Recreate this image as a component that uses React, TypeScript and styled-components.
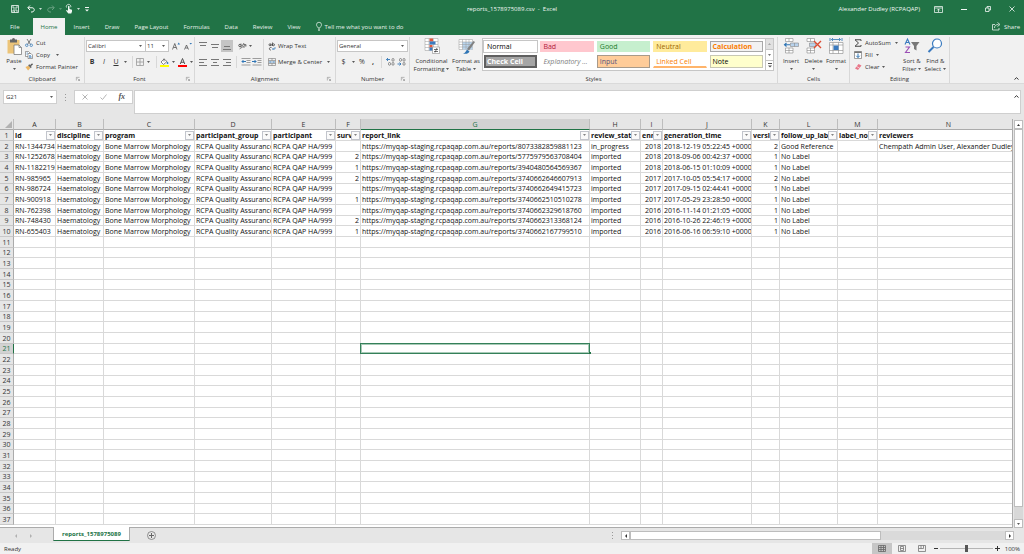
import React from "react";
import styled, { createGlobalStyle, css } from "styled-components";

const GREEN = "#217346";
const LINE = "#d9d9d9";
const UI_FONT = '"Open Sans", "Noto Sans", sans-serif';

const GlobalStyle = createGlobalStyle`
  * { box-sizing: border-box; }
  body { margin: 0; background: #e6e6e6; font: 6px/8px ${UI_FONT}; color: #333; }
  button, input, select, textarea {
    font: inherit; color: inherit; margin: 0; padding: 0; border: 0;
    border-radius: 0; background: none; outline: none;
  }
  button { white-space: nowrap; }
  svg { display: block; flex: none; overflow: visible; }
`;

const Window = styled.div`
  display: flex;
  flex-direction: column;
  height: 100vh;
  overflow: hidden;
`;

/* ---------- title bar and tabs ---------- */

const TitleBar = styled.header`
  display: grid;
  grid-template-columns: 1fr auto 1fr;
  align-items: center;
  height: 18px;
  flex: none;
  background: ${GREEN};
  color: #f3f8f5;
`;

const QuickAccess = styled.div`
  display: flex;
  align-items: center;
  padding-left: 11px;
`;

const QuickButton = styled.button<{ $gap?: number; $dim?: boolean }>`
  display: flex;
  align-items: center;
  gap: 4px;
  margin-right: ${(p) => p.$gap ?? 5}px;
  opacity: ${(p) => (p.$dim ? 0.35 : 1)};
`;

const DocumentName = styled.h1`
  margin: 0;
  font: inherit;
  white-space: pre;
`;

const WindowSide = styled.div`
  display: flex;
  align-items: center;
  justify-content: flex-end;
  padding-right: 9px;
`;

const UserName = styled.span`
  margin-right: 14px;
`;

const WindowButton = styled.button`
  margin-left: 18px;
  &:first-of-type { margin-left: 0; }
`;

const TabStrip = styled.nav`
  display: flex;
  align-items: stretch;
  height: 17px;
  flex: none;
  padding-left: 2px;
  background: ${GREEN};
  color: #e6f0ea;
`;

const RibbonTab = styled.button<{ $active?: boolean }>`
  padding: 0 7px 0 8px;
  &:first-child { padding-right: 13px; }
  ${(p) => p.$active && css`
    padding-right: 8px;
    background: #f1f1f1;
    color: ${GREEN};
  `}
`;

const TellMe = styled.button`
  display: flex;
  align-items: center;
  gap: 3px;
  padding-left: 8px;
`;

const ShareButton = styled(TellMe)`
  margin-left: auto;
  padding-right: 4px;
`;

/* ---------- ribbon ---------- */

const Ribbon = styled.section`
  display: flex;
  flex: none;
  height: 49px;
  padding-top: 2px;
  background: #f1f1f1;
  border-bottom: 1px solid #dadada;
`;

const Group = styled.section<{ $width: number }>`
  display: flex;
  flex-direction: column;
  width: ${(p) => p.$width}px;
  flex: none;
  border-right: 1px solid #d8d8d8;
`;

const GroupBody = styled.div<{ $pad?: number; $gap?: number }>`
  display: flex;
  flex: 1;
  gap: ${(p) => p.$gap ?? 0}px;
  padding-left: ${(p) => p.$pad ?? 4}px;
`;

const GroupFooter = styled.footer`
  display: grid;
  grid-template-columns: 8px 1fr 8px;
  align-items: center;
  height: 8px;
  text-align: center;
`;

const Stack = styled.div<{ $pad?: number }>`
  display: flex;
  flex-direction: column;
  padding-top: ${(p) => p.$pad ?? 0}px;
`;

const SmallButton = styled.button`
  display: flex;
  align-items: center;
  gap: 3px;
  height: 12px;
`;

const BigButton = styled.button<{ $width: number }>`
  display: flex;
  flex-direction: column;
  align-items: center;
  justify-content: flex-start;
  gap: 3px;
  width: ${(p) => p.$width}px;
  padding-top: 1px;
`;

const BigLabel = styled.span`
  display: flex;
  flex-direction: column;
  align-items: center;
`;

const BigPicture = styled.span`
  display: grid;
  place-items: center;
  height: 16px;
`;

const CaretLine = styled.span`
  display: flex;
  align-items: center;
  gap: 2px;
  height: 8px;
`;

const ToolRow = styled.div`
  display: flex;
  align-items: center;
  height: 16px;
`;

const Tool = styled.button<{ $width: number; $active?: boolean }>`
  display: flex;
  align-items: center;
  justify-content: center;
  width: ${(p) => p.$width}px;
  height: 12px;
  flex: none;
  font-size: 7px;
  background: ${(p) => (p.$active ? "#c5c5c5" : "transparent")};
`;

const WideTool = styled.button`
  display: flex;
  align-items: center;
  gap: 2px;
  height: 12px;
  padding-left: 4px;
`;

const Separator = styled.span`
  width: 1px;
  height: 12px;
  margin: 0 3px;
  background: #d8d8d8;
`;

const TallRule = styled.span`
  width: 1px;
  margin: 2px 0 5px;
  background: #d8d8d8;
`;

const SelectBox = styled.label<{ $width: number }>`
  display: flex;
  align-items: center;
  width: ${(p) => p.$width}px;
  height: 12px;
  margin-right: -1px;
  padding: 0 3px 0 1px;
  background: #fff;
  border: 1px solid #c6c6c6;
`;

const Select = styled.select`
  flex: 1;
  min-width: 0;
  appearance: none;
  line-height: 8px;
`;

const Gallery = styled.div`
  display: flex;
  width: 292px;
  height: 33px;
  margin-top: 1px;
  background: #fff;
  border: 1px solid #c6c6c6;
`;

const GalleryGrid = styled.div`
  display: grid;
  flex: 1;
  grid-template-columns: repeat(5, 1fr);
  gap: 3px;
  padding: 2px 2px 2px 1px;
`;

type Swatch = { label: string; fg: string; bg: string; edge?: string; bold?: boolean; italic?: boolean; under?: string; ring?: boolean; double?: boolean };

const StyleButton = styled.button<{ $s: Swatch }>`
  overflow: hidden;
  padding: 0 2px;
  font-size: 7px;
  line-height: 9px;
  text-align: left;
  color: ${(p) => p.$s.fg};
  background: ${(p) => p.$s.bg};
  border: 1px solid ${(p) => p.$s.edge ?? "transparent"};
  font-weight: ${(p) => (p.$s.bold ? 700 : 400)};
  font-style: ${(p) => (p.$s.italic ? "italic" : "normal")};
  ${(p) => p.$s.under && css`border-bottom: 2px solid ${p.$s.under};`}
  ${(p) => p.$s.double && css`border-width: 2px; padding: 0 1px;`}
  ${(p) => p.$s.ring && css`box-shadow: 0 0 0 1px #c6c6c6;`}
`;

const GalleryScroll = styled.div`
  display: grid;
  grid-template-rows: repeat(3, 1fr);
  width: 8px;
  border-left: 1px solid #c6c6c6;
`;

const GalleryArrow = styled.button<{ $off?: boolean }>`
  display: grid;
  place-items: center;
  background: ${(p) => (p.$off ? "#e1e1e1" : "#fff")};
  color: ${(p) => (p.$off ? "#a6a6a6" : "#555")};
  & + & { border-top: 1px solid #c6c6c6; }
`;

const RibbonEnd = styled.div`
  display: flex;
  flex: 1;
  align-items: flex-end;
  justify-content: flex-end;
  padding: 0 5px 3px 0;
`;

/* ---------- formula bar ---------- */

const FormulaBar = styled.section`
  display: flex;
  align-items: flex-start;
  flex: none;
  height: 35px;
  padding: 6px 3px 0;
`;

const NameBox = styled.label`
  display: flex;
  align-items: center;
  width: 54px;
  height: 14px;
  padding: 0 3px 0 2px;
  background: #fff;
  border: 1px solid #cfcfcf;
`;

const NameInput = styled.input`
  flex: 1;
  min-width: 0;
`;

const Grip = styled.span`
  display: grid;
  place-items: center;
  width: 17px;
  height: 14px;
`;

const FormulaActions = styled.div`
  display: flex;
  align-items: center;
  justify-content: space-around;
  width: 59px;
  height: 14px;
  padding: 0 1px;
  background: #fff;
  border: 1px solid #cfcfcf;
`;

const FunctionMark = styled.i`
  font: italic 700 8px/8px "Liberation Serif", serif;
  color: #555;
`;

const FormulaField = styled.label`
  display: flex;
  flex: 1;
  height: 24px;
  margin-left: 1px;
  padding: 4px 1px 0;
  background: #fff;
  border: 1px solid #cfcfcf;
`;

const FormulaInput = styled.textarea`
  flex: 1;
  height: 16px;
  resize: none;
`;

/* ---------- sheet ---------- */

const SheetArea = styled.main`
  display: flex;
  flex: 1;
  min-height: 0;
`;

const SheetView = styled.div`
  flex: 1;
  min-width: 0;
  overflow: hidden;
  background: #fff;
  border-right: 1px solid #ababab;
  border-bottom: 1px solid #ababab;
`;

const Grid = styled.table`
  width: calc(100% + 8px);
  table-layout: fixed;
  border-collapse: separate;
  border-spacing: 0;
  font-size: 7px;
  line-height: 9px;
  color: #111;
`;

const Col = styled.col<{ $width?: number }>`
  width: ${(p) => (p.$width ? `${p.$width}px` : "auto")};
`;

const SheetRow = styled.tr`
  height: 11px;
  &:nth-child(3n) { height: 10px; }
`;

const ColumnHead = styled.th<{ $active?: boolean }>`
  height: 11px;
  padding: 0;
  font-weight: 400;
  line-height: 9px;
  text-align: center;
  color: ${(p) => (p.$active ? GREEN : "#333")};
  background: ${(p) => (p.$active ? "#d2d2d2" : "#e6e6e6")};
  border-right: 1px solid #bdbdbd;
  border-bottom: 1px solid ${(p) => (p.$active ? GREEN : "#ababab")};
`;

const RowHead = styled.th<{ $active?: boolean }>`
  padding: 0;
  font-weight: 400;
  line-height: 9px;
  text-align: center;
  color: ${(p) => (p.$active ? GREEN : "#333")};
  background: ${(p) => (p.$active ? "#d2d2d2" : "#e6e6e6")};
  border-right: 1px solid ${(p) => (p.$active ? GREEN : "#ababab")};
  border-bottom: 1px solid #c8c8c8;
`;

const Corner = styled.td`
  padding: 1px 1px 0 5px;
  background: #e6e6e6;
  border-right: 1px solid #bdbdbd;
  border-bottom: 1px solid #ababab;
`;

const Cell = styled.td<{ $right?: boolean; $selected?: boolean }>`
  padding: ${(p) => (p.$right ? "0 1px 0 0" : "0 0 0 1px")};
  text-align: ${(p) => (p.$right ? "right" : "left")};
  border-right: 1px solid ${LINE};
  border-bottom: 1px solid ${LINE};
  ${(p) => p.$selected && css`
    position: relative;
    &::before {
      content: "";
      position: absolute;
      inset: -1px -1px -1px -1px;
      border: 1px solid #35805a;
      box-shadow: inset 0 0 0 1px #a9cbb8;
    }
    &::after {
      content: "";
      position: absolute;
      right: -2px;
      bottom: -1px;
      width: 2px;
      height: 2px;
      background: ${GREEN};
    }
  `}
`;

const CellText = styled.div`
  height: 9px;
  overflow: hidden;
  white-space: nowrap;
`;

const FieldCell = styled.td`
  padding: 0 0 0 1px;
  font-weight: 700;
  border-right: 1px solid ${LINE};
  border-bottom: 1px solid ${LINE};
`;

const FieldInner = styled.div`
  display: flex;
  align-items: center;
  height: 10px;
`;

const FieldName = styled.span`
  flex: 1;
  min-width: 0;
  overflow: hidden;
  white-space: nowrap;
`;

const FilterButton = styled.button`
  display: grid;
  place-items: center;
  width: 9px;
  height: 9px;
  flex: none;
  background: #fafafa;
  border: 1px solid #c2c5cc;
  color: #666;
`;

const VerticalBar = styled.div`
  display: flex;
  flex-direction: column;
  width: 11px;
  padding: 1px 1px 0;
`;

const BarButton = styled.button`
  display: grid;
  place-items: center;
  width: 9px;
  height: 9px;
  flex: none;
  background: #fff;
  border: 1px solid #bdbdbd;
`;

const VerticalTrack = styled.div`
  display: flex;
  flex-direction: column;
  flex: 1;
  background: #d8d8d8;
`;

const VerticalThumb = styled.div`
  height: 97%;
  background: #fff;
  border: 1px solid #bdbdbd;
`;

/* ---------- sheet tabs and status ---------- */

const SheetTabs = styled.nav`
  display: flex;
  align-items: center;
  flex: none;
  height: 15px;
`;

const TabArrows = styled.div`
  display: flex;
  justify-content: space-between;
  width: 53px;
  padding: 0 21px 0 15px;
  color: #b0b0b0;
`;

const SheetTab = styled.button`
  align-self: flex-start;
  height: 14px;
  margin-top: -1px;
  padding: 1px 8px 0;
  font-weight: 700;
  color: ${GREEN};
  background: #fff;
  border: solid #ababab;
  border-width: 0 1px;
  border-bottom: 1px solid ${GREEN};
`;

const AddSheet = styled.button`
  margin-left: 17px;
`;

const HorizontalArea = styled.div`
  display: flex;
  align-items: center;
  width: 40%;
  margin: 0 10px 0 auto;
`;

const HorizontalTrack = styled.div`
  flex: 1;
  height: 9px;
  background: #dadada;
`;

const HorizontalThumb = styled.div`
  width: 67%;
  height: 9px;
  background: #fff;
  border: 1px solid #bdbdbd;
`;

const StatusBar = styled.footer`
  display: flex;
  align-items: center;
  flex: none;
  height: 11px;
  padding: 0 4px;
  background: #f1f1f1;
`;

const ViewButtons = styled.div`
  display: flex;
  margin: 0 2px 0 auto;
`;

const ViewButton = styled.button<{ $active?: boolean }>`
  display: grid;
  place-items: center;
  width: 20px;
  height: 11px;
  background: ${(p) => (p.$active ? "#c6c6c6" : "transparent")};
`;

const ZoomSlider = styled.input`
  appearance: none;
  width: 53px;
  height: 7px;
  margin: 0 2px;
  background: linear-gradient(#b5b5b5, #b5b5b5) center / 100% 1px no-repeat;
  &::-webkit-slider-thumb {
    appearance: none;
    width: 3px;
    height: 7px;
    background: #555;
  }
`;

const ZoomValue = styled.span`
  margin-left: 5px;
`;

/* ---------- icons ---------- */

type IconProps = { w?: number; h?: number; box?: string; children: React.ReactNode; line?: string; sw?: number };
const Icon = ({ w = 9, h = 9, box, children, line = "currentColor", sw = 1 }: IconProps) => (
  <svg width={w} height={h} viewBox={box ?? `0 0 ${w} ${h}`} fill="none" stroke={line} strokeWidth={sw} aria-hidden="true">{children}</svg>
);

const Caret = () => <Icon w={3} h={2}><path d="M0 0h3L1.500 2z" fill="currentColor" fillOpacity=".8" stroke="none" /></Icon>;
const CaretUp = () => <Icon w={3} h={2}><path d="M0 2h3L1.500 0z" fill="currentColor" stroke="none" /></Icon>;
const CaretLeft = () => <Icon w={2} h={4}><path d="M2 0v4L0 2z" fill="currentColor" stroke="none" /></Icon>;
const CaretRight = () => <Icon w={2} h={4}><path d="M0 0v4l2-2z" fill="currentColor" stroke="none" /></Icon>;
const Chevron = () => <Icon w={5} h={3}><path d="M.5 2.500 2.500.7l2 1.800" /></Icon>;
const Launcher = () => <Icon w={4} h={4} box="0 0 8 8"><path d="M7 .7H.7V7M3 3l4 4M7 4v3H4" stroke="#777" /></Icon>;

const SaveIcon = () => <Icon w={8} h={8} box="0 0 16 16" sw={1.600}><path d="M1 1h14v14H1zM4 1v5h8V1M4 15v-5h8v5M7 11v4" /></Icon>;
const UndoIcon = ({ flip }: { flip?: boolean }) => (
  <Icon w={8} h={8} box="0 0 16 16" sw={2}><path transform={flip ? "matrix(-1 0 0 1 16 0)" : undefined} d="M6 1 1.500 5.500 6 10M2 5.500h8c6 0 6 8 0 8.500H8" /></Icon>
);
const TouchIcon = () => (
  <Icon w={8} h={10} box="0 0 16 20" sw={1.600}>
    <path d="M3 7a4.500 4.500 0 1 1 8.500-.5" />
    <path d="M6 5c0-2 3-2 3 0v5l5 1.500V15l-1.500 4H6.500L2 13l1.500-1L6 13.500z" fill="currentColor" stroke="none" />
  </Icon>
);
const CustomizeIcon = () => <Icon w={4} h={5}><path d="M0 .5h4" /><path d="M0 2.500h4L2 4.500z" fill="currentColor" stroke="none" /></Icon>;
const DisplayIcon = () => <Icon w={9} h={7} box="0 0 18 14" sw={1.500}><path d="M1 1h16v12H1zM1 4h16M9 12V6M6 9l3-3 3 3" /></Icon>;
const MinIcon = () => <Icon w={6} h={6}><path d="M0 3.500h6" /></Icon>;
const RestoreIcon = () => <Icon w={6} h={6} box="0 0 12 12" sw={1.600}><path d="M1 4h7v7H1zM4 4V1h7v7H8" /></Icon>;
const CloseIcon = () => <Icon w={6} h={6} box="0 0 12 12" sw={1.600}><path d="m1 1 10 10M11 1 1 11" /></Icon>;
const BulbIcon = () => <Icon w={6} h={9} box="0 0 12 18" sw={1.500}><path d="M4 12c0-2.500-3-3-3-6.500a5 5 0 0 1 10 0C11 9 8 9.500 8 12zM4 14.500h4M4.500 17h3" /></Icon>;
const ShareIcon = () => <Icon w={9} h={9} box="0 0 18 18" sw={1.600}><path d="M6 5H1v11h13v-4M5 12c0-5 3-7 8-7M11 1l5 4-5 4" /></Icon>;

const PasteIcon = () => (
  <Icon w={15} h={17} box="0 0 30 34">
    <path d="M1 4h24v27H1z" fill="#ecc479" stroke="none" />
    <path d="M6 3h4a3 3 0 0 1 6 0h4v6H6z" fill="#666" stroke="none" />
    <path d="M14 14h10l5 5v14H14z" fill="#fff" stroke="#777" strokeWidth={1.500} />
    <path d="M24 14v5h5" stroke="#777" strokeWidth={1.500} />
  </Icon>
);
const CutIcon = () => (
  <Icon w={8} h={8} box="0 0 16 16" sw={1.500}>
    <path d="m4 0 7 11M12 0 5 11" stroke="#555" />
    <circle cx="3.500" cy="12.500" r="2.500" stroke="#2f75b5" /><circle cx="12.500" cy="12.500" r="2.500" stroke="#2f75b5" />
  </Icon>
);
const CopyIcon = () => (
  <Icon w={8} h={8} box="0 0 16 16" sw={1.200}>
    <path d="M1 1h6l3 3v7H1z" fill="#fff" stroke="#666" /><path d="M6 5h6l3 3v7H6z" fill="#fff" stroke="#666" />
    <path d="M3 4h3M3 6.500h2M8 9h4M8 11h5M8 13h5" stroke="#2f75b5" />
  </Icon>
);
const BrushIcon = () => (
  <Icon w={8} h={8} box="0 0 18 16">
    <path d="M1 8 8 5l4 5-5 6z" fill="#ecb765" stroke="none" /><path d="m7 4 3-2 5 6-2 3z" fill="#666" stroke="none" /><path d="m12 5 5-4" stroke="#555" strokeWidth={3} />
  </Icon>
);
const GrowFont = ({ down }: { down?: boolean }) => (
  <Icon w={8} h={8} box="0 0 16 16" sw={1.600}>
    <path d={down ? "m1 15 4-9 4 9M3 12h5" : "m1 15 4.500-12L10 15M3 11h5.500"} stroke="#555" />
    <path d={down ? "M11 2h5l-2.500 3z" : "M11 5h5l-2.500-4z"} fill="#2f75b5" stroke="none" />
  </Icon>
);
const BorderIcon = () => <Icon w={8} h={8}><path d="M.5.5h7v7h-7zM4 .5v7M.5 4h7" stroke="#999" strokeWidth={0.800} /></Icon>;
const FillColorIcon = () => (
  <Icon w={9} h={9} box="0 0 18 18" sw={1.400}>
    <path d="m8 2 6 5-7 6-5-5z" stroke="#555" fill="#fff" /><path d="M8 7V1" stroke="#555" /><path d="M15 7c3 3 2 5 0 5s-2-2 0-5z" fill="#2f75b5" stroke="none" />
    <path d="M0 14h18v4H0z" fill="#ff0" stroke="none" />
  </Icon>
);
const FontColorIcon = () => <Icon w={9} h={9} box="0 0 18 18"><path d="m4.500 12 4.500-11 4.500 11M6 8.500h6" stroke="#444" strokeWidth={1.800} /><path d="M0 14h18v4H0z" fill="#f00" stroke="none" /></Icon>;
const Lines = ({ d }: { d: string }) => <Icon w={8} h={8}><path d={d} stroke="#777" /></Icon>;
const OrientIcon = () => (
  <Icon w={9} h={8} box="0 0 18 16" sw={1.500}><circle cx="4" cy="7" r="2.500" /><path d="M6 3v8M8 9l4-7M3 14 15 6M12 5h4v4M9 6a3 3 0 1 1 1 4" stroke="#666" /></Icon>
);
const IndentIcon = ({ out }: { out?: boolean }) => (
  <Icon w={10} h={8} box="0 0 20 16" sw={1.600}>
    <path d="M1 1h18M11 5h8M11 9h8M1 14h18" stroke="#888" />
    <path d={out ? "M10 7H2M5 4 2 7l3 3" : "M0 7h8M5 4l3 3-3 3"} stroke="#2f75b5" strokeWidth={2} />
  </Icon>
);
const WrapIcon = () => (
  <Icon w={8} h={9} box="0 0 16 18" sw={1.400}><circle cx="4" cy="5.500" r="2" /><path d="M6 3.500V8M9 1v7" /><circle cx="11" cy="5.500" r="2" /><path d="M7 11H5c-3 0-3 5 0 5h1" /><path d="M14 10v4H9M11 12l-2 2 2 2" stroke="#2f75b5" /></Icon>
);
const MergeIcon = () => (
  <Icon w={8} h={8} box="0 0 16 16" sw={1.200}><path d="M1 1h14v14H1zM1 5h14M1 11h14M8 1v4M8 11v4" stroke="#777" /><path d="M3 8h10M5 6 3 8l2 2M11 6l2 2-2 2" stroke="#2f75b5" /></Icon>
);
const DecimalIcon = ({ more }: { more?: boolean }) => (
  <Icon w={9} h={8} box="0 0 18 16" sw={1.400}>
    <path d={more ? "M8 3H1M4 0 1 3l3 3" : "M1 12h7M5 9l3 3-3 3"} stroke="#2f75b5" strokeWidth={1.800} />
    <rect x="12" y="1" width="4" height="5.500" rx="2" stroke="#666" /><rect x="12" y="9" width="4" height="5.500" rx="2" stroke="#666" />
    <rect x={5} y={more ? 9 : 1} width="4" height="5.500" rx="2" stroke="#666" />
  </Icon>
);
const ConditionalIcon = () => (
  <Icon w={16} h={16} box="0 0 32 32">
    <path d="M2 1h26v24H2zM2 7h26M2 13h26M2 19h26M10 1v24M19 1v24" fill="#fff" stroke="#999" />
    <path d="M11 1h7v6h-7zM11 14h6v5h-6z" fill="#e2583c" stroke="none" /><path d="M11 7h12v6H11zM11 19h8v6h-8z" fill="#3a7abf" stroke="none" />
    <path d="M17 18h14v13H17z" fill="#fff" stroke="#777" /><path d="M20 23h8M20 27h8M26 20l-4 9" stroke="#444" strokeWidth={1.500} />
  </Icon>
);
const TableIcon = () => (
  <Icon w={17} h={16} box="0 0 34 32">
    <path d="M2 3h27v20H2z" fill="#fff" stroke="#999" />
    <path d="M9 8h20v15H9z" fill="#b9d5ee" stroke="none" />
    <path d="M2 8h27M2 13h27M2 18h27M9 3v20M16 3v20M22 3v20" stroke="#999" />
    <path d="m18 22 13-16 3 2-12 17z" fill="#808080" stroke="none" /><path d="M10 31c5-1 5-4 8-8l5 4c-2 5-8 5-13 4z" fill="#2f75b5" stroke="none" />
  </Icon>
);
const InsertIcon = () => (
  <Icon w={15} h={16} box="0 0 30 32" sw={1.200}>
    <path d="M3 1h15v6H3zM10 1v6M3 20h15v10H3zM10 20v10M3 25h15" fill="#fff" stroke="#888" />
    <path d="M13 10h16v7H13zM21 10v7" fill="#b8d2ec" stroke="#888" /><path d="M12 13.500H1M5 10l-4 3.500L5 17" stroke="#2f75b5" strokeWidth={2.200} />
  </Icon>
);
const DeleteIcon = () => (
  <Icon w={16} h={16} box="0 0 32 32" sw={1.200}>
    <path d="M2 1h15v6H2zM9 1v6M2 20h15v10H2zM9 20v10M2 25h15" fill="#fff" stroke="#888" /><path d="M7 10h12v7H7z" fill="#b8d2ec" stroke="#888" />
    <path d="m16 6 14 14M30 6 16 20" stroke="#dc4b32" strokeWidth={2.800} />
  </Icon>
);
const FormatIcon = () => (
  <Icon w={16} h={17} box="0 0 32 34" sw={1.200}>
    <path d="M7 3h18M10 0 7 3l3 3M22 0l3 3-3 3M4 0v6M28 0v6" stroke="#2f75b5" strokeWidth={1.600} />
    <path d="M3 9h27v22H3zM3 14h27M3 25h27M10 9v22M21 9v22" fill="#fff" stroke="#888" /><path d="M11 15h10v9H11z" fill="#3a7abf" stroke="none" />
  </Icon>
);
const SumIcon = () => <Icon w={8} h={8} box="0 0 16 16"><path d="M14 4V1.500H2L9 8l-7 6.500h12V12" stroke="#444" strokeWidth={2} /></Icon>;
const FillDownIcon = () => <Icon w={8} h={8} box="0 0 16 16" sw={1.400}><path d="M1 1h14v14H1z" fill="#fff" stroke="#777" /><path d="M1 2.500h14" stroke="#777" strokeWidth={3} /><path d="M8 5v8M4.500 9.500 8 13l3.500-3.500" stroke="#2f75b5" strokeWidth={2} /></Icon>;
const EraserIcon = () => <Icon w={8} h={8} box="0 0 16 16"><path d="m9 2 6 3-7 9-6-3z" fill="#e8788a" stroke="none" /><path d="m5 7 6 3" stroke="#fff" strokeWidth={1.200} /></Icon>;
const SortIcon = () => (
  <Icon w={16} h={16} box="0 0 32 32" sw={2.200}>
    <path d="m2 13 5-11 5 11M4 9h6" stroke="#3a7abf" /><path d="M3 18h8L3 29h9" stroke="#9b4fb5" />
    <path d="M14 8h17l-6 8v9l-5-3v-6z" fill="#777" stroke="none" />
  </Icon>
);
const FindIcon = () => <Icon w={16} h={16} box="0 0 32 32"><circle cx="20" cy="11" r="9" fill="#fff" stroke="#3a7abf" strokeWidth={2.400} /><path d="M13 18 3 28" stroke="#3a7abf" strokeWidth={4} /></Icon>;
const CancelIcon = () => <Icon w={6} h={6}><path d="m.5.5 5 5M5.500.5l-5 5" stroke="#b5b5b5" /></Icon>;
const EnterIcon = () => <Icon w={7} h={6}><path d="m.5 3.500 2 2 4-5" stroke="#b5b5b5" /></Icon>;
const DotsIcon = () => <Icon w={1} h={7}><path d="M.5 0v7" stroke="#999" strokeDasharray="1 2" /></Icon>;
const CornerIcon = () => <Icon w={7} h={7}><path d="M7 0v7H0z" fill="#b2b2b2" stroke="none" /></Icon>;
const PlusCircle = () => <Icon w={9} h={9}><circle cx="4.500" cy="4.500" r="4" stroke="#777" strokeWidth={0.800} /><path d="M4.500 2v5M2 4.500h5" stroke="#666" /></Icon>;
const NormalView = () => <Icon w={8} h={7}><path d="M.5.5h7v6h-7zM.5 2.500h7M.5 4.500h7M3 .5v6M5.500.5v6" stroke="#666" strokeWidth={0.800} /></Icon>;
const PageView = () => <Icon w={8} h={7}><path d="M.5.5h7v6h-7z" stroke="#777" strokeWidth={0.800} /><path d="M2.500 1.500h3v4h-3zM2.500 3.500h3" stroke="#777" strokeWidth={0.800} /></Icon>;
const BreakView = () => <Icon w={8} h={7}><path d="M.5.5h7v6h-7zM.5 3.500h5v-3M3 .5v3" stroke="#777" strokeWidth={0.800} /></Icon>;

/* ---------- data ---------- */

const swatches: Swatch[] = [
  { label: "Normal", fg: "#000", bg: "#fff", edge: "#fff", ring: true },
  { label: "Bad", fg: "#b0203a", bg: "#ffc7ce" },
  { label: "Good", fg: "#1c7a2c", bg: "#c6efce" },
  { label: "Neutral", fg: "#9c6500", bg: "#ffeb9c" },
  { label: "Calculation", fg: "#fa7d00", bg: "#f2f2f2", edge: "#a8a8a8", bold: true },
  { label: "Check Cell", fg: "#fff", bg: "#a5a5a5", edge: "#606060", bold: true, double: true },
  { label: "Explanatory ...", fg: "#7f7f7f", bg: "#fff", italic: true },
  { label: "Input", fg: "#55557f", bg: "#ffcc99", edge: "#a89a8a" },
  { label: "Linked Cell", fg: "#fa7d00", bg: "#fff", under: "#ffb46b" },
  { label: "Note", fg: "#000", bg: "#ffffcc", edge: "#c8c8b4" },
];

const columns: { letter: string; field: string; width?: number; number?: boolean }[] = [
  { letter: "A", field: "id", width: 42 },
  { letter: "B", field: "discipline", width: 48 },
  { letter: "C", field: "program", width: 91 },
  { letter: "D", field: "participant_group", width: 77 },
  { letter: "E", field: "participant", width: 64 },
  { letter: "F", field: "survey", width: 25, number: true },
  { letter: "G", field: "report_link", width: 229 },
  { letter: "H", field: "review_status", width: 51 },
  { letter: "I", field: "enrolment", width: 22, number: true },
  { letter: "J", field: "generation_time", width: 89 },
  { letter: "K", field: "version", width: 28, number: true },
  { letter: "L", field: "follow_up_label", width: 58 },
  { letter: "M", field: "label_notes", width: 40 },
  { letter: "N", field: "reviewers" },
];

const LINK = "https://myqap-staging.rcpaqap.com.au/reports/";
const report = (id: string, survey: string, link: string, status: string, time: string, version: string, label: string, reviewers = "") => [
  id, "Haematology", "Bone Marrow Morphology", "RCPA Quality Assurance", "RCPA QAP HA/999",
  survey, LINK + link, status, time.slice(0, 4), `${time} +0000`, version, label, "", reviewers,
];

const records = [
  report("RN-1344734", "", "8073382859881123", "in_progress", "2018-12-19 05:22:45", "2", "Good Reference", "Chempath Admin User, Alexander Dudley"),
  report("RN-1252678", "2", "5775979563708404", "imported", "2018-09-06 00:42:37", "1", "No Label"),
  report("RN-1182219", "1", "3940480564569367", "imported", "2018-06-15 01:10:09", "1", "No Label"),
  report("RN-985965", "2", "3740662646607913", "imported", "2017-10-05 05:54:17", "2", "No Label"),
  report("RN-986724", "", "3740662649415723", "imported", "2017-09-15 02:44:41", "1", "No Label"),
  report("RN-900918", "1", "3740662510510278", "imported", "2017-05-29 23:28:50", "1", "No Label"),
  report("RN-762398", "", "3740662329618760", "imported", "2016-11-14 01:21:05", "1", "No Label"),
  report("RN-748430", "2", "3740662313368124", "imported", "2016-10-26 22:46:19", "1", "No Label"),
  report("RN-655403", "1", "3740662167799510", "imported", "2016-06-16 06:59:10", "1", "No Label"),
];

const rowNumbers = Array.from({ length: 37 }, (_, i) => i + 1);
const SELECTED_ROW = 21;
const SELECTED_COLUMN = "G";

/* ---------- parts ---------- */

function RibbonGroup({ name, width, pad, gap, launcher, children }: { name: string; width: number; pad?: number; gap?: number; launcher?: boolean; children: React.ReactNode }) {
  return (
    <Group $width={width} aria-label={name}>
      <GroupBody $pad={pad} $gap={gap}>{children}</GroupBody>
      <GroupFooter><span /><span>{name}</span>{launcher ? <Launcher /> : <span />}</GroupFooter>
    </Group>
  );
}

function Big({ width, icon, lines }: { width: number; icon: React.ReactNode; lines: string[] }) {
  return (
    <BigButton $width={width}>
      <BigPicture>{icon}</BigPicture>
      <BigLabel>
        <span>{lines[0]}</span>
        <CaretLine>{lines[1]}<Caret /></CaretLine>
      </BigLabel>
    </BigButton>
  );
}

function Combo({ label, value, width }: { label: string; value: string; width: number }) {
  return (
    <SelectBox $width={width}>
      <Select aria-label={label} defaultValue={value}><option>{value}</option></Select>
      <Caret />
    </SelectBox>
  );
}

function RibbonPanel() {
  return (
    <Ribbon>
      <RibbonGroup name="Clipboard" width={85} pad={3} launcher>
        <Big width={22} icon={<PasteIcon />} lines={["Paste", ""]} />
        <Stack>
          <SmallButton><CutIcon />Cut</SmallButton>
          <SmallButton><CopyIcon />Copy&nbsp;&nbsp;<Caret /></SmallButton>
          <SmallButton><BrushIcon />Format Painter</SmallButton>
        </Stack>
      </RibbonGroup>

      <RibbonGroup name="Font" width={110} pad={1} launcher>
        <Stack $pad={1}>
          <ToolRow>
            <Combo label="Font" value="Calibri" width={60} />
            <Combo label="Font size" value="11" width={24} />
            <Tool $width={15} aria-label="Increase font size"><GrowFont /></Tool>
            <Tool $width={10} aria-label="Decrease font size"><GrowFont down /></Tool>
          </ToolRow>
          <ToolRow>
            <Tool $width={12}><b>B</b></Tool>
            <Tool $width={12}><i>I</i></Tool>
            <Tool $width={12}><u>U</u></Tool>
            <Tool $width={7} aria-label="Underline options"><Caret /></Tool>
            <Separator />
            <Tool $width={8} aria-label="Borders"><BorderIcon /></Tool>
            <Tool $width={9} aria-label="Border options"><Caret /></Tool>
            <Separator />
            <Tool $width={9} aria-label="Fill color"><FillColorIcon /></Tool>
            <Tool $width={9} aria-label="Fill color options"><Caret /></Tool>
            <Tool $width={9} aria-label="Font color"><FontColorIcon /></Tool>
            <Tool $width={8} aria-label="Font color options"><Caret /></Tool>
          </ToolRow>
        </Stack>
      </RibbonGroup>

      <RibbonGroup name="Alignment" width={141} pad={2} launcher>
        <Stack $pad={1}>
          <ToolRow>
            <Tool $width={12} aria-label="Top align"><Lines d="M0 .5h8M1 3.500h6" /></Tool>
            <Tool $width={12} aria-label="Middle align"><Lines d="M0 2.500h8M1 5.500h6" /></Tool>
            <Tool $width={12} $active aria-label="Bottom align"><Lines d="M0 7.500h8M1 4.500h6" /></Tool>
            <Tool $width={24} aria-label="Orientation"><OrientIcon />&nbsp;<Caret /></Tool>
          </ToolRow>
          <ToolRow>
            <Tool $width={12} aria-label="Align left"><Lines d="M0 1.500h8M0 4.500h5M0 7.500h8" /></Tool>
            <Tool $width={12} aria-label="Center"><Lines d="M0 1.500h8M2 4.500h4M0 7.500h8" /></Tool>
            <Tool $width={12} aria-label="Align right"><Lines d="M0 1.500h8M3 4.500h5M0 7.500h8" /></Tool>
            <Separator />
            <Tool $width={11} aria-label="Decrease indent"><IndentIcon out /></Tool>
            <Tool $width={12} aria-label="Increase indent"><IndentIcon /></Tool>
          </ToolRow>
        </Stack>
        <TallRule />
        <Stack $pad={1}>
          <ToolRow><WideTool><WrapIcon />Wrap Text</WideTool></ToolRow>
          <ToolRow><WideTool><MergeIcon />Merge &amp; Center&nbsp;&nbsp;<Caret /></WideTool></ToolRow>
        </Stack>
      </RibbonGroup>

      <RibbonGroup name="Number" width={74} pad={1} launcher>
        <Stack $pad={1}>
          <ToolRow><Combo label="Number format" value="General" width={71} /></ToolRow>
          <ToolRow>
            <Tool $width={13}>$</Tool>
            <Tool $width={6} aria-label="Currency options"><Caret /></Tool>
            <Tool $width={12}>%</Tool>
            <Tool $width={10}><b>,</b></Tool>
            <Separator />
            <Tool $width={10} aria-label="Increase decimal"><DecimalIcon more /></Tool>
            <Tool $width={12} aria-label="Decrease decimal"><DecimalIcon /></Tool>
          </ToolRow>
        </Stack>
      </RibbonGroup>

      <RibbonGroup name="Styles" width={368} pad={3}>
        <Big width={37} icon={<ConditionalIcon />} lines={["Conditional", "Formatting"]} />
        <Big width={32} icon={<TableIcon />} lines={["Format as", "Table"]} />
        <Gallery>
          <GalleryGrid>
            {swatches.map((s) => <StyleButton key={s.label} $s={s}>{s.label}</StyleButton>)}
          </GalleryGrid>
          <GalleryScroll>
            <GalleryArrow $off aria-label="Previous styles"><CaretUp /></GalleryArrow>
            <GalleryArrow aria-label="Next styles"><Caret /></GalleryArrow>
            <GalleryArrow aria-label="More styles"><CustomizeIcon /></GalleryArrow>
          </GalleryScroll>
        </Gallery>
      </RibbonGroup>

      <RibbonGroup name="Cells" width={72} pad={2}>
        <Big width={22} icon={<InsertIcon />} lines={["Insert", ""]} />
        <Big width={23} icon={<DeleteIcon />} lines={["Delete", ""]} />
        <Big width={22} icon={<FormatIcon />} lines={["Format", ""]} />
      </RibbonGroup>

      <RibbonGroup name="Editing" width={100} pad={4} gap={2}>
        <Stack>
          <SmallButton><SumIcon />AutoSum&nbsp;<Caret /></SmallButton>
          <SmallButton><FillDownIcon />Fill<Caret /></SmallButton>
          <SmallButton><EraserIcon />Clear<Caret /></SmallButton>
        </Stack>
        <Big width={23} icon={<SortIcon />} lines={["Sort &", "Filter"]} />
        <Big width={20} icon={<FindIcon />} lines={["Find &", "Select"]} />
      </RibbonGroup>

      <RibbonEnd><button aria-label="Collapse ribbon"><Chevron /></button></RibbonEnd>
    </Ribbon>
  );
}

function Sheet() {
  return (
    <SheetView>
      <Grid>
        <colgroup>
          <Col $width={14} />
          {columns.map((c) => <Col key={c.letter} $width={c.width} />)}
        </colgroup>
        <thead>
          <tr>
            <Corner><CornerIcon /></Corner>
            {columns.map((c) => <ColumnHead key={c.letter} scope="col" $active={c.letter === SELECTED_COLUMN}>{c.letter}</ColumnHead>)}
          </tr>
        </thead>
        <tbody>
          {rowNumbers.map((n) => (
            <SheetRow key={n}>
              <RowHead scope="row" $active={n === SELECTED_ROW}>{n}</RowHead>
              {columns.map((c, i) => n === 1 ? (
                <FieldCell key={c.letter}>
                  <FieldInner>
                    <FieldName>{c.field}</FieldName>
                    {c.width && <FilterButton aria-label={`Filter ${c.field}`}><Caret /></FilterButton>}
                  </FieldInner>
                </FieldCell>
              ) : (
                <Cell key={c.letter} $right={c.number} $selected={n === SELECTED_ROW && c.letter === SELECTED_COLUMN}>
                  {records[n - 2]?.[i] && <CellText>{records[n - 2][i]}</CellText>}
                </Cell>
              ))}
            </SheetRow>
          ))}
        </tbody>
      </Grid>
    </SheetView>
  );
}

export default function App() {
  return (
    <Window>
      <GlobalStyle />
      <TitleBar>
        <QuickAccess>
          <QuickButton $gap={8} aria-label="Save"><SaveIcon /></QuickButton>
          <QuickButton $gap={5} aria-label="Undo"><UndoIcon /><Caret /></QuickButton>
          <QuickButton $gap={3} $dim aria-label="Redo"><UndoIcon flip /><Caret /></QuickButton>
          <QuickButton $gap={5} aria-label="Touch mode"><TouchIcon /><Caret /></QuickButton>
          <QuickButton aria-label="Customize toolbar"><CustomizeIcon /></QuickButton>
        </QuickAccess>
        <DocumentName>reports_1578975089.csv  -  Excel</DocumentName>
        <WindowSide>
          <UserName>Alexander Dudley (RCPAQAP)</UserName>
          <WindowButton aria-label="Ribbon display options"><DisplayIcon /></WindowButton>
          <WindowButton aria-label="Minimize"><MinIcon /></WindowButton>
          <WindowButton aria-label="Restore"><RestoreIcon /></WindowButton>
          <WindowButton aria-label="Close"><CloseIcon /></WindowButton>
        </WindowSide>
      </TitleBar>

      <TabStrip>
        {["File", "Home", "Insert", "Draw", "Page Layout", "Formulas", "Data", "Review", "View"].map((t) => (
          <RibbonTab key={t} $active={t === "Home"}>{t}</RibbonTab>
        ))}
        <TellMe><BulbIcon />Tell me what you want to do</TellMe>
        <ShareButton><ShareIcon />Share</ShareButton>
      </TabStrip>

      <RibbonPanel />

      <FormulaBar>
        <NameBox><NameInput aria-label="Name box" defaultValue="G21" /><Caret /></NameBox>
        <Grip><DotsIcon /></Grip>
        <FormulaActions>
          <button aria-label="Cancel"><CancelIcon /></button>
          <button aria-label="Enter"><EnterIcon /></button>
          <button aria-label="Insert function"><FunctionMark>fx</FunctionMark></button>
        </FormulaActions>
        <FormulaField><FormulaInput aria-label="Formula" /><Chevron /></FormulaField>
      </FormulaBar>

      <SheetArea>
        <Sheet />
        <VerticalBar>
          <BarButton aria-label="Scroll up"><CaretUp /></BarButton>
          <VerticalTrack><VerticalThumb /></VerticalTrack>
          <BarButton aria-label="Scroll down"><Caret /></BarButton>
        </VerticalBar>
      </SheetArea>

      <SheetTabs>
        <TabArrows>
          <button aria-label="Previous sheet"><CaretLeft /></button>
          <button aria-label="Next sheet"><CaretRight /></button>
        </TabArrows>
        <SheetTab>reports_1578975089</SheetTab>
        <AddSheet aria-label="New sheet"><PlusCircle /></AddSheet>
        <HorizontalArea>
          <Grip><DotsIcon /></Grip>
          <BarButton aria-label="Scroll left"><CaretLeft /></BarButton>
          <HorizontalTrack><HorizontalThumb /></HorizontalTrack>
          <BarButton aria-label="Scroll right"><CaretRight /></BarButton>
        </HorizontalArea>
      </SheetTabs>

      <StatusBar>
        <span>Ready</span>
        <ViewButtons>
          <ViewButton $active aria-label="Normal view"><NormalView /></ViewButton>
          <ViewButton aria-label="Page layout view"><PageView /></ViewButton>
          <ViewButton aria-label="Page break view"><BreakView /></ViewButton>
        </ViewButtons>
        <button aria-label="Zoom out"><Icon w={4} h={5}><path d="M0 2.500h4" /></Icon></button>
        <ZoomSlider type="range" aria-label="Zoom" min={10} max={190} defaultValue={100} />
        <button aria-label="Zoom in"><Icon w={5} h={5}><path d="M0 2.500h5M2.500 0v5" /></Icon></button>
        <ZoomValue>100%</ZoomValue>
      </StatusBar>
    </Window>
  );
}
